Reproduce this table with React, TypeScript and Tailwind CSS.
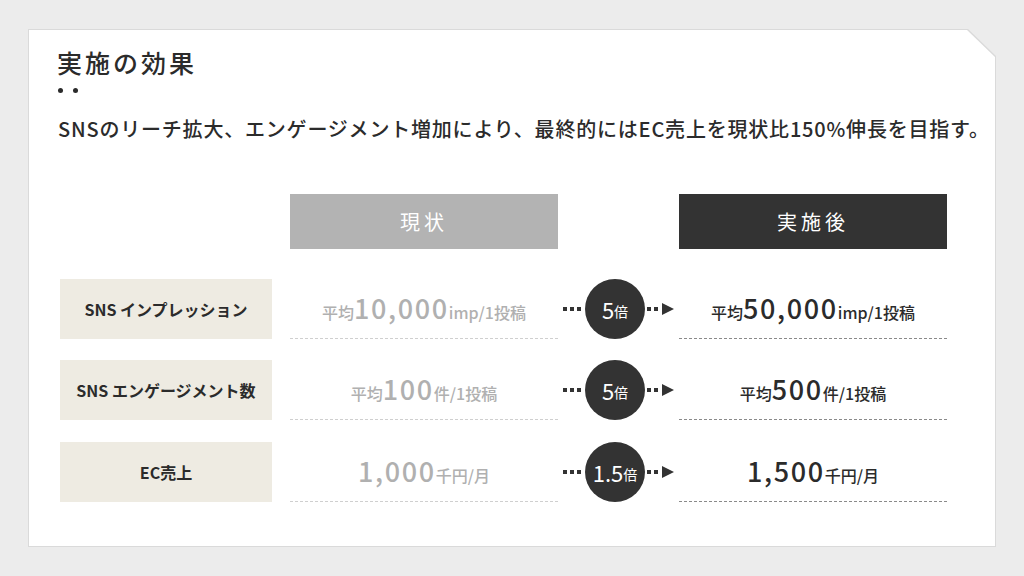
const font = { fontFamily: '"Noto Sans CJK JP", "Noto Sans", sans-serif' };

type Row = {
  label: string;
  before: { pre?: string; num: string; unit: string };
  after: { pre?: string; num: string; unit: string };
  rate: string;
};

const rows: Row[] = [
  {
    label: "SNS インプレッション",
    before: { pre: "平均", num: "10,000", unit: "imp/1投稿" },
    after: { pre: "平均", num: "50,000", unit: "imp/1投稿" },
    rate: "5",
  },
  {
    label: "SNS エンゲージメント数",
    before: { pre: "平均", num: "100", unit: "件/1投稿" },
    after: { pre: "平均", num: "500", unit: "件/1投稿" },
    rate: "5",
  },
  {
    label: "EC売上",
    before: { num: "1,000", unit: "千円/月" },
    after: { num: "1,500", unit: "千円/月" },
    rate: "1.5",
  },
];

function Value({ v }: { v: Row["before"] }) {
  return (
    <span className="flex items-baseline">
      {v.pre && <span className="text-[16px] font-medium">{v.pre}</span>}
      <span className="text-[27px] font-medium leading-none tracking-[0.06em]">{v.num}</span>
      <span className="text-[16px] font-medium">{v.unit}</span>
    </span>
  );
}

function Dot() {
  return <span className="w-[4px] h-[4px] bg-[#333]" />;
}

function Arrow({ rate }: { rate: string }) {
  return (
    <div className="flex items-center justify-center">
      <div className="flex items-center gap-[3px] mr-[4px]">
        <Dot />
        <Dot />
        <Dot />
      </div>
      <div className="w-[60px] h-[60px] rounded-full bg-[#333] text-white flex items-center justify-center">
        <span className="text-[22px] leading-none">{rate}</span>
        <span className="text-[14px] leading-none mt-[4px]">倍</span>
      </div>
      <div className="flex items-center gap-[3px] ml-[2px]">
        <Dot />
        <Dot />
        <svg width="12" height="12" viewBox="0 0 12 12" className="ml-[1px]">
          <polygon points="0,0 12,6 0,12" fill="#333" />
        </svg>
      </div>
    </div>
  );
}

export default function App() {
  return (
    <div className="w-[1024px] h-[576px] bg-[#ececec] pt-[29px] pl-[28px]" style={font}>
      <div className="w-[968px] h-[518px] bg-[#dadada] p-px [clip-path:polygon(0_0,calc(100%-28px)_0,100%_27px,100%_100%,0_100%)]">
        <div className="w-full h-full bg-white [clip-path:polygon(0_0,calc(100%-28px)_0,100%_27px,100%_100%,0_100%)] pl-[28px] pt-[20px] text-[#2b2b2b]">
          <h1 className="text-[25px] leading-none font-medium tracking-[0.12em]">実施の効果</h1>
          <div className="flex gap-[10px] mt-[13px] ml-[1px]">
            <span className="w-[5px] h-[5px] rounded-full bg-[#2b2b2b]" />
            <span className="w-[5px] h-[5px] rounded-full bg-[#2b2b2b]" />
          </div>
          <p className="mt-[26px] ml-[1px] text-[20px] leading-none font-medium tracking-[0.04em]">
            SNSのリーチ拡大、エンゲージメント増加により、最終的にはEC売上を現状比150%伸長を目指す。
          </p>

          <div className="ml-[3px] mt-[55px] grid grid-cols-[212px_18px_268px_121px_268px]">
            <div />
            <div />
            <div className="h-[55px] bg-[#b3b3b3] text-white text-[20px] tracking-[0.2em] flex items-center justify-center">
              現状
            </div>
            <div />
            <div className="h-[55px] bg-[#333] text-white text-[20px] tracking-[0.2em] flex items-center justify-center">
              実施後
            </div>
          </div>

          <div className="ml-[3px] mt-[30px] flex flex-col gap-[21px]">
            {rows.map((r, i) => (
              <div
                key={r.label}
                className={
                  i === 2
                    ? "grid grid-cols-[212px_18px_268px_121px_268px] h-[60px] mt-[1px]"
                    : "grid grid-cols-[212px_18px_268px_121px_268px] h-[60px]"
                }
              >
                <div className="bg-[#eeebe2] flex items-center justify-center text-[16px] font-bold text-[#2b2b2b]">
                  {r.label}
                </div>
                <div />
                <div className="border-b border-dashed border-[#cfcfcf] flex items-center justify-center text-[#b0b0b0]">
                  <Value v={r.before} />
                </div>
                <Arrow rate={r.rate} />
                <div className="border-b border-dashed border-[#8a8a8a] flex items-center justify-center text-[#2b2b2b]">
                  <Value v={r.after} />
                </div>
              </div>
            ))}
          </div>
        </div>
      </div>
    </div>
  );
}
